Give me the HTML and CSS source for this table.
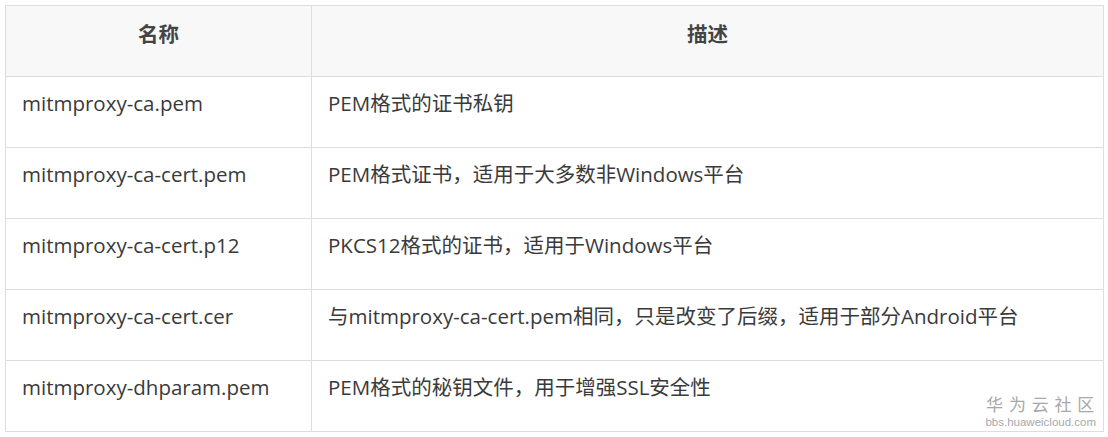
FILE: index.html
```html
<!DOCTYPE html>
<html lang="zh-CN">
<head>
<meta charset="UTF-8">
<meta name="viewport" content="width=device-width, initial-scale=1.0">
<title>mitmproxy 证书文件</title>
<link rel="stylesheet" href="styles.css">
</head>
<body>

<div class="wrap">
    <table class="cert-table">
        <thead>
            <tr>
                <th class="col-name">名称</th>
                <th>描述</th>
            </tr>
        </thead>
        <tbody>
            <tr>
                <td>mitmproxy-ca.pem</td>
                <td>PEM格式的证书私钥</td>
            </tr>
            <tr>
                <td>mitmproxy-ca-cert.pem</td>
                <td>PEM格式证书，适用于大多数非Windows平台</td>
            </tr>
            <tr>
                <td>mitmproxy-ca-cert.p12</td>
                <td>PKCS12格式的证书，适用于Windows平台</td>
            </tr>
            <tr>
                <td>mitmproxy-ca-cert.cer</td>
                <td>与mitmproxy-ca-cert.pem相同，只是改变了后缀，适用于部分Android平台</td>
            </tr>
            <tr>
                <td>mitmproxy-dhparam.pem</td>
                <td>PEM格式的秘钥文件，用于增强SSL安全性</td>
            </tr>
        </tbody>
    </table>

    <div class="watermark">
        <div class="wm-title">华 为 云 社 区</div>
        <div class="wm-url">bbs.huaweicloud.com</div>
    </div>
</div>

</body>
</html>
```

FILE: styles.css
```css
* { box-sizing: border-box; }
body {
    margin: 0;
    background-color: white;
    color: #3a3a3a;
    font-family: "Open Sans", "Noto Sans CJK SC", sans-serif;
}
.wrap {
    position: relative;
    padding: 5px 4px 0 5px;
}
.cert-table {
    width: 100%;
    border-collapse: collapse;
    border: 1px solid #e2e2e2;
    font-size: 20.5px;
    line-height: 28px;
}
th, td {
    border: 1px solid #dddddd;
    text-align: left;
    vertical-align: top;
}
th {
    background-color: #f8f8f8;
    color: #444;
    font-weight: bold;
    text-align: center;
    height: 71px;
    padding: 14px 16px 0;
}
td {
    height: 71px;
    padding: 12px 16px 0;
}
.col-name { width: 306px; }
.watermark {
    position: absolute;
    right: 12px;
    bottom: 4px;
    text-align: center;
    color: #a8a8a8;
}
.wm-title {
    font-family: "Noto Sans CJK SC", sans-serif;
    font-size: 17px;
    line-height: 18px;
    letter-spacing: 1px;
    margin-bottom: 3px;
}
.wm-url {
    font-family: "Liberation Sans", sans-serif;
    font-size: 11.5px;
    line-height: 12px;
}
```
